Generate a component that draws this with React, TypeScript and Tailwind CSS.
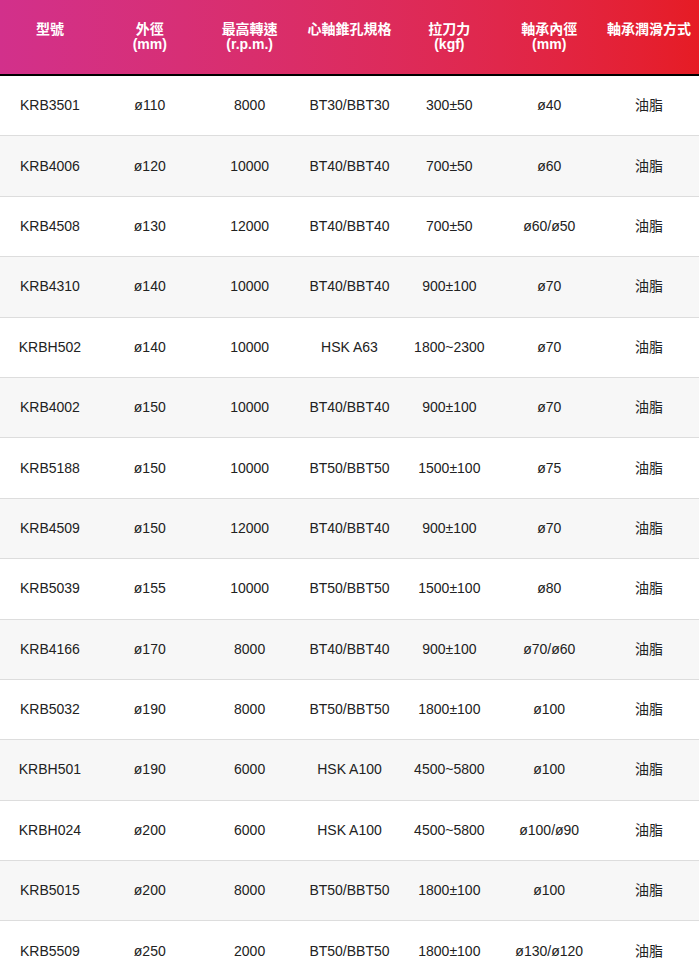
const headers: [string, string?][] = [
  ["型號"],
  ["外徑", "(mm)"],
  ["最高轉速", "(r.p.m.)"],
  ["心軸錐孔規格"],
  ["拉刀力", "(kgf)"],
  ["軸承內徑", "(mm)"],
  ["軸承潤滑方式"],
]

const rows: string[][] = [
  ["KRB3501", "ø110", "8000", "BT30/BBT30", "300±50", "ø40", "油脂"],
  ["KRB4006", "ø120", "10000", "BT40/BBT40", "700±50", "ø60", "油脂"],
  ["KRB4508", "ø130", "12000", "BT40/BBT40", "700±50", "ø60/ø50", "油脂"],
  ["KRB4310", "ø140", "10000", "BT40/BBT40", "900±100", "ø70", "油脂"],
  ["KRBH502", "ø140", "10000", "HSK A63", "1800~2300", "ø70", "油脂"],
  ["KRB4002", "ø150", "10000", "BT40/BBT40", "900±100", "ø70", "油脂"],
  ["KRB5188", "ø150", "10000", "BT50/BBT50", "1500±100", "ø75", "油脂"],
  ["KRB4509", "ø150", "12000", "BT40/BBT40", "900±100", "ø70", "油脂"],
  ["KRB5039", "ø155", "10000", "BT50/BBT50", "1500±100", "ø80", "油脂"],
  ["KRB4166", "ø170", "8000", "BT40/BBT40", "900±100", "ø70/ø60", "油脂"],
  ["KRB5032", "ø190", "8000", "BT50/BBT50", "1800±100", "ø100", "油脂"],
  ["KRBH501", "ø190", "6000", "HSK A100", "4500~5800", "ø100", "油脂"],
  ["KRBH024", "ø200", "6000", "HSK A100", "4500~5800", "ø100/ø90", "油脂"],
  ["KRB5015", "ø200", "8000", "BT50/BBT50", "1800±100", "ø100", "油脂"],
  ["KRB5509", "ø250", "2000", "BT50/BBT50", "1800±100", "ø130/ø120", "油脂"],
]

export default function App() {
  return (
    <div className="w-[699px] bg-white font-['Liberation_Sans','Noto_Sans_CJK_TC',sans-serif]">
      <div className="grid grid-cols-7 h-[76px] border-b-2 border-black bg-gradient-to-r from-[#d2308b] to-[#e61c24]">
        {headers.map(([a, b], i) => (
          <div key={i} className="flex flex-col items-center pt-[22px] text-[14px] font-bold leading-[15px] text-white whitespace-nowrap">
            <span>{a}</span>
            {b ? <span>{b}</span> : null}
          </div>
        ))}
      </div>
      {rows.map((r, i) => (
        <div
          key={i}
          className={
            "grid grid-cols-7 h-[60.4px] border-b border-[#dddddd] text-[14px] text-[#222222] " +
            (i % 2 === 1 ? "bg-[#f7f7f7]" : "bg-white")
          }
        >
          {r.map((c, j) => (
            <div key={j} className="flex items-center justify-center whitespace-nowrap">
              {c}
            </div>
          ))}
        </div>
      ))}
    </div>
  )
}
